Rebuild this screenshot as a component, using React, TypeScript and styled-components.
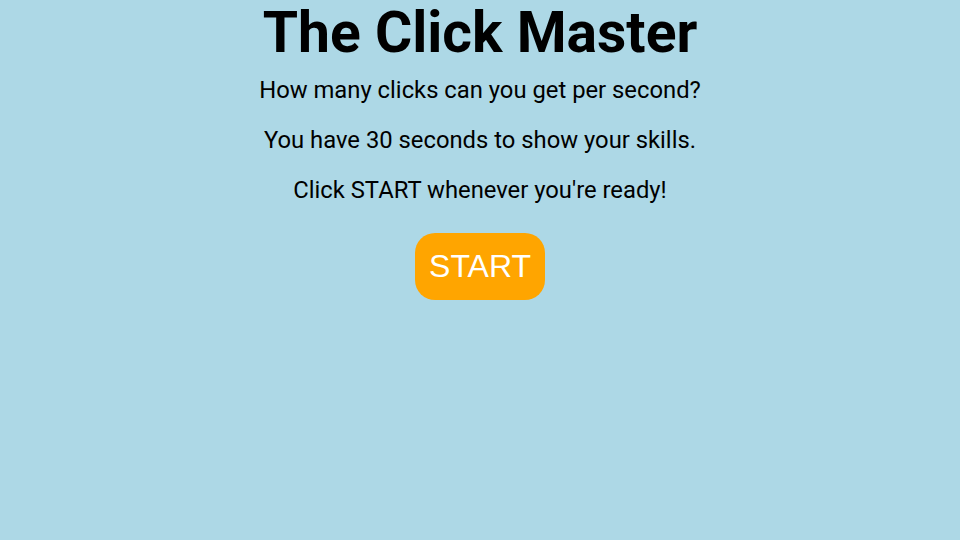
import React from "react";
import styled, { createGlobalStyle } from "styled-components";

const Global = createGlobalStyle`
  html, body { margin: 0; padding: 0; background: #add8e6; }
  body { font-family: "Roboto", "Liberation Sans", sans-serif; color: #000; }
`;

const Page = styled.main`
  display: flex;
  flex-direction: column;
  align-items: center;
  padding-top: 1px;
`;

const Title = styled.h1`
  margin: 0;
  font-size: 57px;
  line-height: 64px;
  font-weight: 700;
`;

const Text = styled.p`
  margin: 0;
  font-size: 23.8px;
  line-height: 50px;
`;

const Intro = styled.div`
  display: flex;
  flex-direction: column;
  align-items: center;
`;

const StartButton = styled.button`
  margin-top: 18px;
  width: 130px;
  height: 67px;
  border: none;
  border-radius: 20px;
  background: #ffa500;
  color: #fff;
  font-family: "Liberation Sans", Arial, sans-serif;
  font-size: 32px;
  cursor: pointer;
`;

export default function App() {
  return (
    <>
      <Global />
      <Page>
        <Title>The Click Master</Title>
        <Intro>
          <Text>How many clicks can you get per second?</Text>
          <Text>You have 30 seconds to show your skills.</Text>
          <Text>Click START whenever you're ready!</Text>
        </Intro>
        <StartButton>START</StartButton>
      </Page>
    </>
  );
}
